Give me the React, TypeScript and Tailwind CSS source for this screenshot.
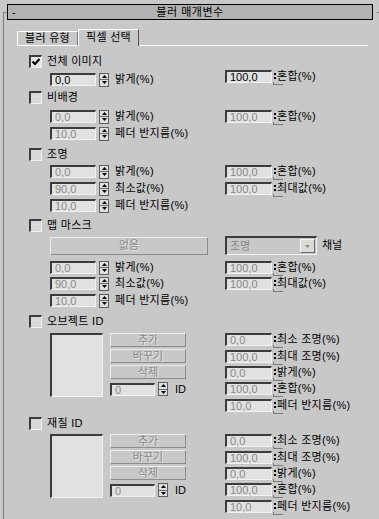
import React from 'react';

const sunken =
  'border-t-2 border-l-2 border-b border-r border-t-[#3c3c3c] border-l-[#3c3c3c] border-b-[#f2f2f2] border-r-[#f2f2f2]';
const raised =
  'border border-t-[#ececec] border-l-[#ececec] border-b-[#8c8c8c] border-r-[#8c8c8c]';
const dimText = 'text-[#8a8a8a] [text-shadow:1px_1px_0_#e6e6e6]';

function NumBox({ value, w, active }: { value: string; w: string; active?: boolean }) {
  return (
    <div
      className={`${w} h-[13px] ${sunken} bg-[#e1e1e1] pl-[3px] text-[11px] leading-[10px] ${
        active ? 'text-black' : 'text-[#8a8a8a]'
      }`}
    >
      {value}
    </div>
  );
}

function Spinner() {
  return (
    <div className="flex h-[14px] w-[10px] flex-col border border-[#5e5e5e] bg-[#dedede]">
      <div className="flex flex-1 items-center justify-center border-b border-[#6a6a6a]">
        <svg width="5" height="3" viewBox="0 0 5 3">
          <path d="M2.5 0 L5 3 L0 3 Z" fill="#000" />
        </svg>
      </div>
      <div className="flex flex-1 items-center justify-center">
        <svg width="5" height="3" viewBox="0 0 5 3">
          <path d="M0 0 L5 0 L2.5 3 Z" fill="#000" />
        </svg>
      </div>
    </div>
  );
}

// squashed spinner next to the right-hand fields
function MiniSpin() {
  return (
    <div className="relative h-[13px] w-[5px] shrink-0">
      <div className="ml-[2px] mt-[3px] h-[2px] w-[2px] bg-black" />
      <div className="ml-[2px] mt-[2px] h-[2px] w-[2px] bg-black" />
      <div className="absolute left-[1px] top-[12px] h-[3px] w-[10px] border-b border-l border-[#7a7a7a]" />
    </div>
  );
}

function RightField({ value, label, active }: { value: string; label: string; active?: boolean }) {
  return (
    <div className="flex h-[13px] items-center">
      <NumBox value={value} w="w-[47px]" active={active} />
      <MiniSpin />
      <span className="text-[11px] leading-none tracking-[0.3px] text-black">{label}</span>
    </div>
  );
}

function SpinRow({
  mt,
  value,
  label,
  right,
  rightLabel,
  active,
  rightUp,
}: {
  mt: string;
  value: string;
  label: string;
  right?: string;
  rightLabel?: string;
  active?: boolean;
  rightUp?: boolean;
}) {
  return (
    <div className={`${mt} ml-[46px] flex h-[13px] items-center`}>
      <NumBox value={value} w="w-[46px]" active={active} />
      <div className="ml-[3px]">
        <Spinner />
      </div>
      <span className="ml-[6px] w-[110px] text-[11px] leading-none tracking-[0.3px] text-black">{label}</span>
      {right && (
        <div className={rightUp ? '-mt-[6px]' : ''}>
          <RightField value={right} label={rightLabel || ''} active={active} />
        </div>
      )}
    </div>
  );
}

function Check({ mt, label, checked }: { mt: string; label: string; checked?: boolean }) {
  return (
    <div className={`${mt} ml-[25px] flex h-[13px] items-center`}>
      <div
        className={`flex h-[13px] w-[13px] items-center justify-center ${sunken} ${
          checked ? 'bg-[#e6e6e6]' : 'bg-[#d8d8d8]'
        }`}
      >
        {checked && (
          <svg width="8" height="8" viewBox="0 0 8 8">
            <path d="M0.5 3.5 L3 6 L7.5 1" stroke="#000" strokeWidth="2" fill="none" />
          </svg>
        )}
      </div>
      <span className="ml-[5px] text-[11px] leading-none tracking-[0.3px] text-black">{label}</span>
    </div>
  );
}

function SmallButton({ label, mt }: { label: string; mt: string }) {
  return (
    <div
      className={`${mt} flex h-[14px] w-[76px] items-center justify-center ${raised} bg-[#c8c8c8] text-[11px] leading-none ${dimText}`}
    >
      {label}
    </div>
  );
}

function IdBlock({ mt }: { mt: string }) {
  const rows = [
    { mt: 'mt-0', v: '0,0', l: '최소 조명(%)' },
    { mt: 'mt-[4px]', v: '100,0', l: '최대 조명(%)' },
    { mt: 'mt-[3px]', v: '0,0', l: '밝게(%)' },
    { mt: 'mt-[3px]', v: '100,0', l: '혼합(%)' },
    { mt: 'mt-[4px]', v: '10,0', l: '페더 반지름(%)' },
  ];
  return (
    <div className={`${mt} ml-[46px] flex items-start`}>
      <div className={`h-[64px] w-[53px] ${sunken} bg-[#e1e1e1]`} />
      <div className="ml-[7px] flex w-[76px] flex-col">
        <SmallButton label="추가" mt="mt-0" />
        <SmallButton label="바꾸기" mt="mt-[2px]" />
        <SmallButton label="삭제" mt="mt-[2px]" />
        <div className="mt-[3px] flex h-[14px] items-center">
          <NumBox value="0" w="w-[45px]" />
          <div className="ml-[3px]">
            <Spinner />
          </div>
          <span className="ml-[7px] text-[11px] leading-none text-black">ID</span>
        </div>
      </div>
      <div className="ml-[39px] flex flex-col">
        {rows.map((r, i) => (
          <div key={i} className={r.mt}>
            <RightField value={r.v} label={r.l} />
          </div>
        ))}
      </div>
    </div>
  );
}

export default function App() {
  return (
    <div className="h-[519px] w-[379px] overflow-hidden bg-[#c8c8c8] [font-family:'Liberation_Sans','Noto_Sans_CJK_KR',sans-serif]">
      <div className="ml-[3px] mt-[12px] h-[600px] w-[400px] border-l border-t border-[#7c7c7c]">
        {/* Rollout header */}
        <div className="-mt-[9px] ml-[3px] w-[370px] bg-[#c8c8c8]">
          <div className="flex h-[16px] w-[366px] items-center border border-black bg-[#b2b2b2] text-[11px] leading-none text-black">
            <span className="w-[20px] pl-[4px]">-</span>
            <span className="flex-1 text-center tracking-[0.5px]">블러 매개변수</span>
            <span className="w-[20px]" />
          </div>
        </div>

        {/* Tabs */}
        <div className="ml-[13px] mt-[9px] flex h-[17px] w-[351px] items-end">
          <div className="flex h-[15px] w-[61px] items-center justify-center rounded-tl-[2px] border-b border-l border-r border-t border-b-white border-l-white border-r-[#7a7a7a] border-t-white text-[11px] leading-none tracking-[0.3px] text-black">
            블러 유형
          </div>
          <div className="flex h-[17px] w-[61px] items-center justify-center border-l border-r border-t border-l-white border-r-[#505050] border-t-white pb-[2px] text-[11px] leading-none tracking-[0.3px] text-black">
            픽셀 선택
          </div>
          <div className="h-[1px] flex-1 bg-white" />
        </div>

        {/* Content */}
        <div className="flex flex-col">
          <Check mt="mt-[9px]" label="전체 이미지" checked />
          <SpinRow mt="mt-[5px]" value="0,0" label="밝게(%)" right="100,0" rightLabel="혼합(%)" active rightUp />

          <Check mt="mt-[5px]" label="비배경" />
          <SpinRow mt="mt-[6px]" value="0,0" label="밝게(%)" right="100,0" rightLabel="혼합(%)" />
          <SpinRow mt="mt-[4px]" value="10,0" label="페더 반지름(%)" />

          <Check mt="mt-[8px]" label="조명" />
          <SpinRow mt="mt-[4px]" value="0,0" label="밝게(%)" right="100,0" rightLabel="혼합(%)" />
          <SpinRow mt="mt-[4px]" value="90,0" label="최소값(%)" right="100,0" rightLabel="최대값(%)" />
          <SpinRow mt="mt-[4px]" value="10,0" label="페더 반지름(%)" />

          <Check mt="mt-[7px]" label="맵 마스크" />
          <div className="ml-[46px] mt-[4px] flex h-[19px] items-center">
            <div
              className={`flex h-[18px] w-[158px] items-center justify-center ${raised} bg-[#c8c8c8] text-[11px] leading-none ${dimText}`}
            >
              없음
            </div>
            <div className={`ml-[17px] flex h-[19px] w-[92px] items-center justify-between ${sunken} bg-[#c8c8c8]`}>
              <span className="pl-[3px] text-[11px] leading-none text-[#8a8a8a]">조명</span>
              <div className="mr-[1px] flex h-[14px] w-[15px] items-center justify-center border border-t-[#f4f4f4] border-l-[#f4f4f4] border-b-[#6a6a6a] border-r-[#6a6a6a] bg-[#dcdcd6]">
                <svg width="5" height="3" viewBox="0 0 5 3">
                  <path d="M0 0 L5 0 L2.5 3 Z" fill="#8a8a8a" />
                </svg>
              </div>
            </div>
            <span className="ml-[5px] text-[11px] leading-none text-black">채널</span>
          </div>
          <SpinRow mt="mt-[6px]" value="0,0" label="밝게(%)" right="100,0" rightLabel="혼합(%)" />
          <SpinRow mt="mt-[3px]" value="90,0" label="최소값(%)" right="100,0" rightLabel="최대값(%)" />
          <SpinRow mt="mt-[4px]" value="10,0" label="페더 반지름(%)" />

          <Check mt="mt-[8px]" label="오브젝트 ID" />
          <IdBlock mt="mt-[5px]" />

          <Check mt="mt-[5px]" label="재질 ID" />
          <IdBlock mt="mt-[4px]" />
        </div>
      </div>
    </div>
  );
}
